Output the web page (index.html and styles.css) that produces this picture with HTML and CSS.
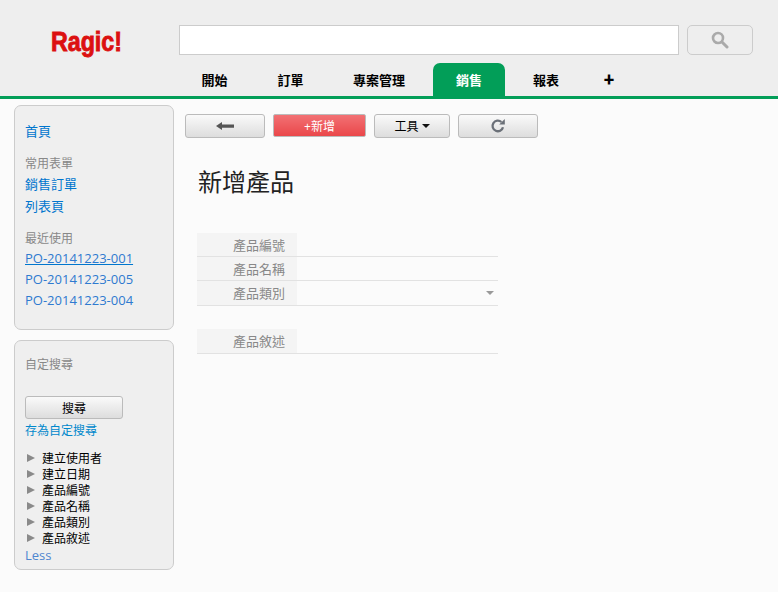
FILE: index.html
```html
<!DOCTYPE html>
<html lang="zh-Hant">
<head>
<meta charset="utf-8">
<title>新增產品</title>
<link rel="stylesheet" href="styles.css">
</head>
<body>
<header class="header">
  <div class="top-row">
    <div class="logo"><span class="logo-text">Ragic!</span></div>
    <div class="search-input"></div>
    <button class="search-btn" aria-label="搜尋">
      <svg width="18" height="18" viewBox="0 0 18 18"><circle cx="7" cy="7" r="5" fill="none" stroke="#aaa" stroke-width="2.6"/><path d="M11 11l5 5" stroke="#aaa" stroke-width="3" stroke-linecap="round"/></svg>
    </button>
  </div>
  <nav class="tabs">
    <a class="tab">開始</a>
    <a class="tab tab-narrow">訂單</a>
    <a class="tab tab-wide">專案管理</a>
    <a class="tab tab-active">銷售</a>
    <a class="tab tab-report">報表</a>
    <a class="tab tab-plus">✚</a>
  </nav>
</header>
<div class="page">
  <aside class="sidebar">
    <section class="panel panel-nav">
      <a class="link home">首頁</a>
      <div class="caption cap-first">常用表單</div>
      <a class="link row">銷售訂單</a>
      <a class="link row">列表頁</a>
      <div class="caption cap-second">最近使用</div>
      <a class="link row recent underlined">PO-20141223-001</a>
      <a class="link row recent">PO-20141223-005</a>
      <a class="link row recent">PO-20141223-004</a>
    </section>
    <section class="panel panel-search">
      <div class="caption">自定搜尋</div>
      <button class="btn search-run">搜尋</button>
      <a class="link save">存為自定搜尋</a>
      <ul class="filters">
        <li><i class="tri"></i>建立使用者</li>
        <li><i class="tri"></i>建立日期</li>
        <li><i class="tri"></i>產品編號</li>
        <li><i class="tri"></i>產品名稱</li>
        <li><i class="tri"></i>產品類別</li>
        <li><i class="tri"></i>產品敘述</li>
      </ul>
      <a class="less">Less</a>
    </section>
  </aside>
  <main class="main">
    <div class="toolbar">
      <button class="btn tool" aria-label="返回">
        <svg width="18" height="10" viewBox="0 0 18 10"><path d="M0 5l6-4v2.5h12v3.2H6V9z" fill="#555"/></svg>
      </button>
      <button class="btn-new">+新增</button>
      <button class="btn tool-menu">工具<i class="caret"></i></button>
      <button class="btn tool" aria-label="重新整理">
        <svg width="16" height="16" viewBox="0 0 16 16"><path d="M13 9.2A5.3 5.3 0 1 1 11.4 4" fill="none" stroke="#6b7078" stroke-width="2.3"/><path d="M9.2 6.6h5.6V1z" fill="#6b7078"/></svg>
      </button>
    </div>
    <h1 class="title">新增產品</h1>
    <div class="form">
      <div class="field f1"><label>產品編號</label><div class="value"></div></div>
      <div class="field f2"><label>產品名稱</label><div class="value"></div></div>
      <div class="field f3"><label>產品類別</label><div class="value"><i class="select-caret"></i></div></div>
      <div class="field f4"><label>產品敘述</label><div class="value"></div></div>
    </div>
  </main>
</div>
</body>
</html>
```
FILE: styles.css
```css
* { box-sizing: border-box; }
html, body { margin: 0; height: 592px; overflow: hidden; }
body {
  background: #fbfbfb;
  font-family: "Open Sans", "Noto Sans CJK TC", sans-serif;
  font-size: 13px;
}
button { font-family: inherit; padding: 0; cursor: pointer; }

.header {
  height: 99px;
  background: #eeeeee;
  border-bottom: 3px solid #029e58;
}
.top-row { display: flex; align-items: flex-start; padding-top: 25px; height: 63px; }
.logo { width: 179px; padding-top: 1px; padding-left: 51px; }
.logo-text {
  display: inline-block;
  font-family: "Liberation Sans", sans-serif;
  font-weight: 700;
  font-size: 27px;
  line-height: 32px;
  color: #dc1010;
  -webkit-text-stroke: 0.9px #dc1010;
  transform: scaleX(0.86);
  transform-origin: left center;
}
.search-input {
  width: 500px;
  height: 30px;
  background: #fff;
  border: 1px solid #ccc;
}
.search-btn {
  width: 66px;
  height: 30px;
  margin-left: 8px;
  background: #eee;
  border: 1px solid #ccc;
  border-radius: 5px;
  display: flex;
  align-items: center;
  justify-content: center;
}

.tabs { display: flex; height: 33px; padding-left: 175px; }
.tab {
  width: 79px;
  height: 33px;
  line-height: 33px;
  text-align: center;
  font-size: 13px;
  font-weight: 700;
  color: #000;
  font-family: "Noto Sans CJK TC", sans-serif;
}
.tab-narrow { width: 73px; }
.tab-wide { width: 106px; padding-right: 2px; }
.tab-active {
  width: 72px;
  margin-right: 5px;
  background: #029e58;
  color: #fff;
  border-radius: 7px 7px 0 0;
}
.tab-report { width: 72px; }
.tab-plus { width: 54px; font-size: 11px; }

.page { display: flex; align-items: flex-start; }
.sidebar { width: 160px; margin: 6px 0 0 14px; flex: none; }
.panel {
  background: #efefef;
  border: 1px solid #ccc;
  border-radius: 7px;
  padding: 0 10px;
}
.panel-nav { height: 225px; padding-top: 15px; }
.panel-search { height: 230px; margin-top: 10px; padding-top: 15px; }
.link { display: block; color: #0076ce; font-size: 13px; line-height: 20px; }
.caption { color: #888; font-size: 12px; line-height: 18px; }
.cap-first { margin-top: 14px; }
.cap-second { margin-top: 13px; }
.row { line-height: 22px; }
.recent { font-family: "Open Sans", sans-serif; font-size: 13px; line-height: 21px; color: #2e7ad0; }
.underlined { text-decoration: underline; text-decoration-color: #0076ce; }
.search-run {
  display: block;
  width: 98px;
  height: 23px;
  margin-top: 22px;
}
.btn {
  background: linear-gradient(#fafafa, #dddddd);
  border: 1px solid #bbb;
  border-radius: 3px;
  font-size: 12px;
  color: #000;
}
.save { color: #0088cc; font-size: 12px; line-height: 16px; margin-top: 4px; }
.filters { list-style: none; margin: 11px 0 0; padding: 0; }
.filters li {
  display: flex;
  align-items: center;
  height: 16px;
  font-size: 12px;
  color: #000;
}
.tri {
  width: 0;
  height: 0;
  margin-left: 2px;
  margin-right: 7px;
  border-left: 8px solid #8a8a8a;
  border-top: 4.5px solid transparent;
  border-bottom: 4.5px solid transparent;
}
.less { display: block; font-size: 13px; line-height: 18px; color: #4f86d0; }

.main { margin-left: 11px; flex: 1; }
.toolbar { display: flex; gap: 8px; align-items: flex-start; margin-top: 15px; }
.tool { width: 80px; height: 24px; display: flex; align-items: center; justify-content: center; }
.btn-new {
  width: 93px;
  height: 23px;
  background: linear-gradient(#f27174, #ea474a);
  border: 1px solid #bbb;
  border-radius: 2px;
  color: #fff;
  font-size: 12px;
}
.tool-menu { width: 76px; height: 24px; display: flex; align-items: center; justify-content: center; gap: 3px; }
.caret {
  width: 0; height: 0;
  border-top: 4px solid #111;
  border-left: 4px solid transparent;
  border-right: 4px solid transparent;
}
.title {
  margin: 28px 0 0 13px;
  font-size: 24px;
  line-height: 32px;
  font-weight: 400;
  color: #222;
}
.form { width: 301px; margin: 35px 0 0 12px; }
.field { display: flex; border-bottom: 1px solid #e2e2e2; }
.f1, .f2 { height: 24px; }
.f3 { height: 25px; }
.f4 { height: 25px; margin-top: 23px; }
.field label {
  width: 100px;
  background: #f4f4f4;
  color: #888;
  font-size: 13px;
  line-height: 24px;
  text-align: right;
  padding-right: 12px;
}
.value { flex: 1; display: flex; align-items: center; justify-content: flex-end; padding-right: 4px; }
.select-caret {
  width: 0; height: 0;
  border-top: 4px solid #999;
  border-left: 4px solid transparent;
  border-right: 4px solid transparent;
}
```
